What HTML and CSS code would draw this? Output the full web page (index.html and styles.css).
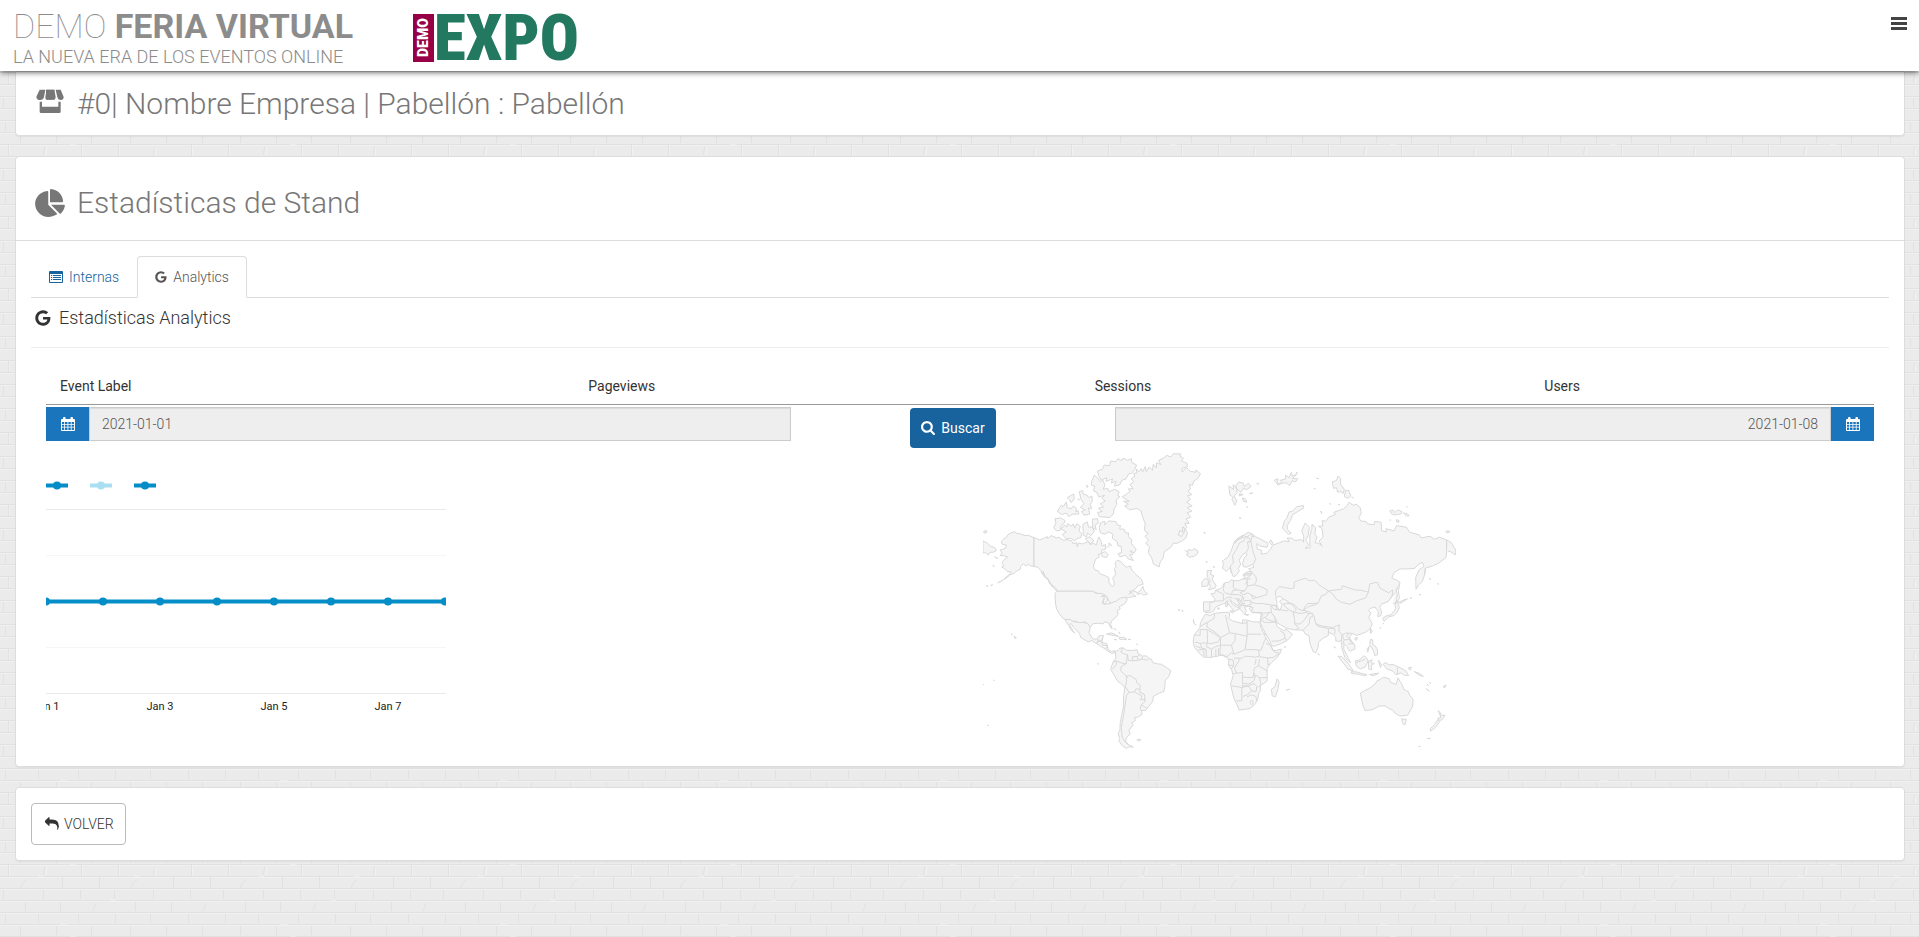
FILE: index.html
```html
<!DOCTYPE html>
<html lang="es">
<head>
<meta charset="utf-8">
<title>Estadísticas de Stand</title>
<link rel="stylesheet" href="styles.css">
</head>
<body>
<svg class="defs" aria-hidden="true">
  <symbol id="google" viewBox="0 0 1792 1792"><path d="M896 786h725q12 67 12 128 0 217-91 387.500t-259.500 266.500-386.500 96q-157 0-299-60.500t-245-163.500-163.500-245-60.500-299 60.500-299 163.500-245 245-163.500 299-60.500q300 0 515 201l-209 201q-123-119-306-119-129 0-238.500 65t-173.500 176.500-64 243.500 64 243.500 173.500 176.500 238.500 65q87 0 160-24t120-60 82-82 51.500-87 22.500-78h-436v-264z"/></symbol>
  <symbol id="calendar" viewBox="0 0 14 14"><path fill-rule="evenodd" d="M1 2h1V1q0-1 1-1h.6q1 0 1 1v1h4.800V1q0-1 1-1h.6q1 0 1 1v1h1q1 0 1 1v10q0 1-1 1H1q-1 0-1-1V3q0-1 1-1zM1 5v2h2.200V5zm3 0v2h2.500V5zm3.300 0v2h2.500V5zm3.300 0v2H13V5zM1 7.700v2h2.200v-2zm3 0v2h2.500v-2zm3.300 0v2h2.500v-2zm3.300 0v2H13v-2zM1 10.500V13h2.200v-2.500zm3 0V13h2.500v-2.500zm3.300 0V13h2.500v-2.500zm3.300 0V13H13v-2.500z"/></symbol>
</svg>

<header class="topbar">
  <a class="brand" href="#">
    <span class="brand-name"><span class="thin">DEMO</span> <strong>FERIA VIRTUAL</strong></span>
    <span class="brand-tag">LA NUEVA ERA DE LOS EVENTOS ONLINE</span>
  </a>
  <a class="expo" href="#"><span class="expo-demo">DEMO</span><span class="expo-name">EXPO</span></a>
  <button class="menu" type="button" aria-label="Menú">
    <svg viewBox="0 0 16 14"><path d="M0 0h16v3H0zM0 5h16v3H0zM0 10h16v3H0z"/></svg>
  </button>
</header>

<main>
  <section class="panel company">
    <h1 class="title">
      <svg class="title-icon" viewBox="106 260 90 80"><path d="M120 266h17l-4 22q-2 9-12 9-10 0-11-10zM141 266h9v22q-1 9-7 9t-6-9zM153 266h11l4 22q-1 9-7 9t-8-9zM168 266h15l9 22q0 9-9 9-8 0-10-9z"/><path d="M139 266h25v22q0 9-12 9t-13-9z"/><path d="M120 302h7v15h49v-15h7v30q0 4-4 4h-55q-4 0-4-4z"/></svg>
      #0| Nombre Empresa | Pabellón : Pabellón
    </h1>
  </section>

  <section class="panel stats">
    <div class="stats-head">
      <h2 class="title">
        <svg class="title-icon" viewBox="0 0 544 512"><path d="M527.790 288H290.500l158.030 158.030c6.040 6.040 15.980 6.530 22.190.68 38.700-36.460 65.320-85.610 73.130-140.860 1.340-9.460-6.510-17.850-16.060-17.850zm-15.830-64.800C503.720 103.740 408.260 8.280 288.800.04 279.680-.59 272 7.100 272 16.240V240h223.770c9.140 0 16.820-7.680 16.190-16.800zM240 288V50.710c0-9.550-8.390-17.400-17.840-16.060C86.990 51.490-4.100 155.600.14 280.370 4.500 408.510 114.830 513.590 243.030 511.980c50.400-.63 96.970-16.870 150.260-44.030 7.900-5.600 8.420-17.230 1.570-24.080L240 288z"/></svg>
        Estadísticas de Stand
      </h2>
    </div>
    <div class="stats-body">
      <nav class="tabs">
        <a class="tab" href="#"><svg class="icon" viewBox="0 0 14 12"><path fill-rule="evenodd" d="M1 0h12q1 0 1 1v10q0 1-1 1H1q-1 0-1-1V1q0-1 1-1zM1 3v8h12V3z"/><path d="M2 4h1.200v1H2zM4 4h8v1H4zM2 6h1.200v1H2zM4 6h8v1H4zM2 8h1.200v1H2zM4 8h8v1H4z"/></svg>Internas</a>
        <a class="tab active" href="#"><svg class="icon" viewBox="100 100 1592 1592"><use href="#google" width="1792" height="1792"/></svg>Analytics</a>
      </nav>
      <h3 class="subtitle"><svg viewBox="100 100 1592 1592"><use href="#google" width="1792" height="1792"/></svg>Estadísticas Analytics</h3>

      <div class="report">
        <table class="metrics">
          <thead><tr><th>Event Label</th><th>Pageviews</th><th>Sessions</th><th>Users</th></tr></thead>
        </table>
        <form class="range">
          <div class="date">
            <label class="addon" for="from"><svg class="icon" viewBox="0 0 14 14"><use href="#calendar"/></svg></label>
            <input id="from" type="text" value="2021-01-01" aria-label="Desde" readonly>
          </div>
          <button class="search" type="button"><svg class="icon" viewBox="64 128 1664 1664"><path d="M1216 832q0-185-131.500-316.500t-316.500-131.500-316.500 131.500-131.500 316.500 131.500 316.500 316.500 131.500 316.500-131.500 131.500-316.500zm512 832q0 52-38 90t-90 38q-54 0-90-38l-343-342q-179 124-399 124-143 0-273.500-55.500t-225-150-150-225-55.500-273.500 55.500-273.500 150-225 225-150 273.500-55.500 273.500 55.500 225 150 150 225 55.500 273.500q0 220-124 399l343 343q37 37 37 90z"/></svg>Buscar</button>
          <div class="date end">
            <input id="to" type="text" value="2021-01-08" aria-label="Hasta" readonly>
            <label class="addon" for="to"><svg class="icon" viewBox="0 0 14 14"><use href="#calendar"/></svg></label>
          </div>
        </form>

        <div class="charts">
          <div class="chart-cell">
            <svg class="line-chart" viewBox="0 0 400 245" role="img" aria-label="Sesiones por día">
              <g class="legend">
                <g class="series"><path d="M0 14.500h22"/><circle cx="11" cy="14.500" r="4"/></g>
                <g class="series light"><path d="M44 14.500h22"/><circle cx="55" cy="14.500" r="4"/></g>
                <g class="series"><path d="M88 14.500h22"/><circle cx="99" cy="14.500" r="4"/></g>
              </g>
              <path class="grid" d="M0 38.500h400M0 222.500h400"/>
              <path class="grid minor" d="M0 84.500h400M0 176.500h400"/>
              <g class="series">
                <path d="M0 130.500h400"/>
                <circle cx="0" cy="130.500" r="4"/><circle cx="57" cy="130.500" r="4"/><circle cx="114" cy="130.500" r="4"/><circle cx="171" cy="130.500" r="4"/><circle cx="228" cy="130.500" r="4"/><circle cx="285" cy="130.500" r="4"/><circle cx="342" cy="130.500" r="4"/><circle cx="399" cy="130.500" r="4"/>
              </g>
              <g class="axis"><text x="0" y="239">Jan 1</text><text x="114" y="239">Jan 3</text><text x="228" y="239">Jan 5</text><text x="342" y="239">Jan 7</text></g>
            </svg>
          </div>
          <div class="map-cell">
            <svg class="map" viewBox="69 30 1420 900" role="img" aria-label="Mapa mundial">
              <g>
                <!-- North America -->
                <path d="M124 303L131 294 139 290 145 280 163 272 170 277 182 279 195 284 205 283 222 290V376L212 375 205 370 197 375 190 369 182 377 181 385 170 390 163 397 150 402 142 409 136 411 146 402 154 393 141 391 136 385 125 378 132 374 126 367 130 359 143 348 134 345 120 343 126 337 121 327 137 322 139 312 127 310z"/>
                <path d="M222 290L238 297 247 294 262 287 264 293 273 284 290 291 297 289 310 298 322 296 335 300 339 308 350 305 352 318 355 306 368 309 385 302 390 311 400 307 410 312 412 300 417 288 424 302 426 315 437 311 436 325 424 328 427 337 416 340 418 348 407 355 400 376 405 387 415 390 419 398 437 405 447 410 447 424 456 437 463 433 462 420 458 412 467 401 464 383 469 376 465 367 472 358 482 361 491 372 499 379 512 375 515 387 524 397 533 405 544 414 550 430 535 434 523 447 508 452 518 458 528 466 515 468 506 470 497 472 475 480 450 488 445 475 438 464 415 458 398 451H290L280 440 268 426 263 412 252 402 242 388 235 380 222 376z"/>
                <path d="M290 451H398L408 457 428 458 434 462 424 466 441 468 443 478 435 490 429 483 433 471 427 488 437 490 450 488 470 480 481 472 497 468 502 477 493 490 478 497 481 504 472 509 475 520 467 530 455 540 452 550 457 564 450 558 446 546 433 543 430 549 415 547 398 549 391 560 383 548 372 543 366 546 355 545 348 541 337 541 330 536 312 535 298 519 290 504 287 490 285 458z"/>
                <path d="M315 536L330 536 337 541 355 545 372 545 383 548 391 560 387 575 398 594 411 595 418 585 431 584 427 597 415 602 409 608 396 599 385 603 362 590 359 578 342 560 333 548 328 550 336 564 344 577 334 568 326 554z"/>
                <path d="M409 608L415 600 426 604 441 609 445 627 455 632 464 629 465 635 455 638 440 628 432 622z"/>
                <path d="M440 580L453 576 466 581 476 587 463 584zM478 590L491 589 501 595 488 596 479 595zM463 595L470 597zM505 595l7 1zM530 609l4 3zM463 563l6 4zM476 574l5 4zM153 580l4 1zM162 586l7 5-3 2z"/>
                <!-- Arctic archipelago -->
                <path d="M413 90L428 84 433 72 449 74 452 60 468 62 474 53 486 59 490 51 503 58 514 53 515 64 530 72 525 85 515 97 506 99 498 114 486 118 479 132 463 135 469 121 454 126 458 114 438 121 441 110 424 117 416 104z"/>
                <path d="M395 122L403 103 413 111 422 122 429 118 435 132 430 145 444 142 447 152 464 145 478 153 473 164 480 167 468 177 471 190 463 203 460 219 450 230 418 227 413 215 427 211 415 202 431 198 421 189 436 180 426 172 434 163 417 168 410 153 401 150 404 135 394 132z"/>
                <path d="M358 152L368 149 370 160 380 162 387 170 396 165 397 181 391 190 395 203 385 201 390 219 372 223 365 211 376 207 361 199 372 188 363 174zM322 170L341 159 343 174 334 185 329 177zM292 211L304 193 310 197 319 183 322 200 334 203 340 195 350 203 347 213 355 209 357 219 337 220 326 227 319 216 306 221zM380 132l4 4-2 4zM353 174l6 3z"/>
                <path d="M285 233L301 231 316 239 311 249 304 253 301 268 290 270 281 260 288 248zM304 264L314 252 320 259 323 248 335 256 340 249 344 262 351 248 361 256 357 270 365 278 363 290 350 293 345 300 331 292 318 293 307 281 319 273z"/>
                <path d="M369 250L382 243 386 259 397 258 403 271 393 284 382 276 380 288 370 283zM397 235L413 233 415 247 405 252 409 266 399 262zM376 294L390 287 402 300 391 308zM423 337L436 332 445 341 440 350 427 347z"/>
                <path d="M422 245L435 241 434 252 447 240 468 242 472 252 482 254 479 264 493 265 497 276 506 276 505 288 516 296 514 307 529 325 523 336 511 329 519 341 509 342 521 359 505 354 497 343 480 348 474 338 485 335 484 316 474 315 472 302 457 292 459 280 447 273 433 280 421 275 418 260z"/>
                <path d="M69 300L83 307 91 316 104 320 109 329 100 334 89 334 85 342 76 335 69 336zM71 271l8-2 2 5-8 3zM104 348l10 5zM98 374l5 2zM113 426l8-4zM122 422l8-5zM92 434l6-2zM79 435l5 1zM131 416l9-6z"/>
                <path d="M243 393L254 409 264 414 271 429 286 440 293 449M249 390L257 410 270 423 276 437M530 459L543 447 549 436 553 450 563 459 551 463 545 458 531 460M506 460L522 450 533 455M440 320L448 315 447 306 457 315"/>
                <!-- Greenland and Iceland -->
                <path d="M487 168L499 160 511 151 505 144 520 143 510 131 522 122 514 114 525 106 521 97 531 96 529 84 538 92 544 83 548 93 556 77 559 92 568 78 578 88 580 70 590 81 590 65 603 71 596 58 612 51 620 43 633 48 641 38 663 39 660 46 671 52 664 59 681 67 683 77 666 82 667 93 680 80 691 91 708 94 708 87 722 98 714 112 702 120 698 133 688 131 692 144 684 150 696 161 683 164 692 176 680 183 697 195 682 200 696 211 682 215 692 229 679 233 688 247 675 247 681 260 676 265 683 275 678 291 665 301 652 307 640 307 633 319 613 333 609 353 601 363 598 378 581 370 575 350 565 335 569 317 557 307 566 298 555 286 565 277 553 268 556 249 548 227 543 210 531 202 510 207 494 195 506 190 491 181 508 181z"/>
                <path d="M675 327L682 333 687 325 696 329 703 323 714 329 713 339 703 346 690 349 679 341 686 337z"/>
                <path d="M655 282L660 268 669 274 668 258 675 262 672 277 665 287zM732 275l4 1zM738 362l4 2zM760 377l4 2zM655 507l5 1zM666 510l3 1z"/>
                <!-- South America -->
                <path d="M466 632L474 629 480 622 490 621 499 628 515 629 532 627 533 636 541 641 547 646 560 645 568 653 575 655 578 665 592 669 604 670 620 680 633 690 627 707 616 719 615 737 612 752 598 757 580 767 579 781 568 795 557 809 544 809 547 820 533 830 525 829 526 840 515 846 520 853 507 868 511 880 500 890 497 901 506 912 520 919 507 918 500 923 488 916 477 901 479 893 475 877 480 868 481 845 486 820 491 795 491 765 495 741 485 729 474 722 460 698 452 685 459 665 468 652z"/>
                <path d="M531 897l5-2 7 2-5 4zM412 668l4 2zM100 718l3 1zM65 730l6 1zM82 853l4 1z"/>
              </g>
              <g class="borders">
                <path d="M490 621L482 633 495 640 503 641 500 660 499 668 487 667 468 660 459 665M503 641L505 659 520 660 516 648 532 647 541 641M532 647L535 658 547 655 546 647M547 655L562 658 568 653M520 660L535 658M499 668L484 677 482 690 490 697 499 706 500 723 495 740 501 743 507 755 524 753 528 744 540 745 541 733 530 725 529 716 510 704 499 706M468 660L470 670 458 685M507 755L500 763 496 790 490 830 484 860 487 890 495 903 506 912M524 753L530 757 546 765 542 778 553 775 556 781 544 792 541 802 544 809M556 781L553 760 540 755 540 745M544 792L560 802"/>
                <path d="M499 706L505 711M425 604L428 613 444 614M436 622L445 620M415 595L413 607M428 590L426 604"/>
              </g>
              <g transform="translate(660 0)">
                <!-- Europe and Asia -->
                <path d="M128 436L134 426 147 424 155 417 166 420 180 418 188 414 197 410 189 403 200 394 213 390 206 384 222 379 219 370 200 379 190 377 189 365 193 352 202 342 198 335 187 343 178 358 183 370 175 383 179 390 167 405 160 407 155 394 151 380 140 391 128 382 131 367 127 361 144 349 154 330 163 304 176 290 194 281 205 274 218 279 227 287 237 292 265 307 262 319 240 315 231 308 232 324 246 329 244 339 260 338 272 325 278 314 268 303 274 297 281 312 300 305 312 300 328 302 322 291 338 292 345 299 365 296 371 304 372 286 366 270 376 246 389 259 385 284 378 298 387 312 376 322 391 320 390 299 390 285 396 265 397 250 408 260 405 280 412 288 406 306 417 307 427 316 418 300 430 289 427 263 416 256 429 255 427 239 438 241 448 228 468 220 462 214 491 204 503 193 508 184 520 193 529 190 541 199 545 218 537 229 543 240 560 242 563 249 583 251 585 241 604 244 606 269 620 273 619 263 643 270 651 254 680 259 690 274 719 282 724 291 751 286 764 295 779 289 801 297V332L799 350 775 368 761 374 737 382 735 401 728 421 717 432 709 445 708 410 718 387 733 376 728 364 714 372 706 382 687 384 661 384 643 395 636 412 650 417 659 425 650 450 638 465 625 482 605 490 600 499 606 513 603 525 594 527 596 512 590 505 586 498 571 503 566 508 574 517 567 530 578 549 570 565 558 574 530 584 519 578 509 588 516 604 525 612 526 624 512 631 506 627 503 618 493 609 492 625 500 640 506 654 513 666 507 661 496 651 488 627 485 614 485 598 478 602 468 600 468 590 460 580 446 574 446 584 430 592 416 604 415 620 408 636 400 632 390 606 388 585 376 579 370 568 347 567 328 564 316 560 302 552 287 543 292 557 301 563 315 570 318 564 338 580 331 590 320 600 304 608 284 616 276 615 268 595 258 580 244 553 241 545 242 538 244 515 219 516 208 504 214 496 194 498 200 511 194 519 181 506 180 498 161 486 149 475 158 490 180 503 169 509 164 512 154 500 142 485 127 490 117 494 106 500 103 509 90 516 76 514 71 511 71 483 103 483 106 475 93 459 105 457 107 448 121 444z"/>
                <path d="M801 297L815 305 822 318 827 324V342L814 333 805 330M798 271l9-2 4 4-9 3zM630 210L640 207 645 215 655 207 667 212 664 219 645 222 636 219zM671 216L684 219 688 225 680 225zM651 236L658 239 657 245 650 242zM680 197l3 1zM630 237l3 1z"/>
                <path d="M371 194L351 197 338 211 328 213 321 232 314 240 308 261 316 270 326 280 334 277 323 265 322 254 332 238 339 221 352 213 372 201zM283 118L295 113 292 125 302 128 306 121 300 118 316 115 318 102 327 111 335 94 337 106 351 99 338 113 354 113 347 123 337 119 330 134 320 126 309 126 294 132 290 125zM349 95l5 1zM402 142l5 2zM410 112l7 1zM458 122L470 119 475 105 483 113 482 130 494 145 490 158 482 151 474 154 470 140 461 142zM497 149L507 148 513 165 504 172 494 167zM516 168l5 3zM449 188l4 2zM475 190l5 2zM423 210l3 8z"/>
                <path d="M147 135L161 145 160 131 170 141 172 156 163 165 171 180 165 193 161 184 156 175 161 170 150 162zM167 135L177 123 191 127 193 137 206 127 214 136 201 146 190 142 183 154 172 145zM188 171L197 174 201 184 190 180zM178 158L190 161 178 165zM209 158l10-2zM231 128l6 1zM200 197l4 2zM178 231l6 1zM72 275l4 1zM79 362l3 1zM100 377l4 2z"/>
                <!-- British Isles -->
                <path d="M82 389L96 389 91 400 102 404 97 415 109 434 106 441 86 447 92 437 87 427 92 419 82 410zM66 424L76 412 86 418 84 435 66 437z"/>
                <path d="M114 501h4v4h-4zM138 482l6-2-1 16-5 2zM150 510h11l-2 7zM193 520l14 1-3 3zM212 483L229 488 248 488 272 492 292 494"/>
                <!-- Africa -->
                <path d="M76 520L90 524 104 517 126 515 148 514 149 526 146 532 160 541 178 545 188 548 188 537 203 538 219 543 240 543 241 549 244 562 251 577 264 601 277 622 282 630 305 625 300 639 288 654 271 669 262 682 262 700 262 720 242 735 241 752 236 759 235 771 227 788 211 803 178 808 171 790 162 772 152 730 160 705 156 688 146 674 147 660 142 649 130 642 112 646 90 650 72 649 61 640 44 620 40 603 43 583 60 560 62 545z"/>
                <path d="M292 714L298 724 294 747 287 768 277 765 275 745 285 738zM320 748l10-3zM313 618l5 1zM414 639l5 3zM463 617l4 5zM45 550l4 2zM40 536l3 12zM6 508l4 2z"/>
                <!-- Far East islands -->
                <path d="M656 420L661 426 656 449 659 471 653 482 659 500 652 514 643 524 627 528 613 541 609 532 622 524 634 522 648 504 646 491 651 478 661 488 683 474 672 477 657 485M648 446L653 460 649 488 640 487M718 462l5-1zM691 473l5-2zM748 412l6 4zM773 428l4 2zM572 562L577 571 573 578zM527 590L534 591 530 598 525 596zM600 562l4-2zM609 549l3-2z"/>
                <path d="M572 596L579 597 579 611 586 615 593 625 594 641 586 645 582 633 577 622 570 612zM562 624L569 616 564 634zM527 660L539 657 552 645 560 650 565 662 556 679 541 684 530 676zM475 646L486 647 499 661 511 675 521 691 505 685 491 667zM514 693L530 693 546 698 562 701 557 705 534 700 516 698zM566 660L578 657 572 665 584 668 574 674 577 686 567 685zM596 658l6 22 4-7zM569 701l28-4-16 8z"/>
                <path d="M610 670L619 665 627 672 641 671 662 681 678 690 687 704 673 703 664 696 649 702 640 691 621 684zM685 682L695 679 691 688zM704 692L720 698 731 707 716 702zM740 744l9 7zM748 724l6 5zM742 731l4 3zM790 738l9-6-3 8z"/>
                <!-- Australia and New Zealand -->
                <path d="M542 757L554 750 570 742 586 730 592 720 602 716 611 709 629 714 632 724 649 731 655 711 661 722 667 731 672 745 686 753 691 765 700 775 699 796 684 823 661 826 646 817 638 807 627 803 616 795 598 796 577 807 556 809 549 792zM665 834L680 836 676 852 670 849zM775 809L783 817 781 822 796 824 786 838 775 838 775 832 784 830zM773 838L780 843 767 860 753 871 751 864 764 853zM743 893l9 0zM717 917l5 0z"/>
              </g>
              <g class="sea" transform="translate(660 0)">
                <path d="M288 470L301 466 309 473 299 482 307 492 300 508 289 502 292 487z"/>
              </g>
              <g class="borders" transform="translate(660 0)">
                <path d="M154 397L152 374 161 366 158 345 170 325 180 305 191 301 197 290 208 291 213 302 203 303 206 322 199 335M213 302L216 287 222 286M206 302L213 302 218 325 222 340 228 355 220 370M213 390L214 402 201 412 203 435 195 450 172 447 160 440 161 420M203 419L196 431M213 390L228 407 230 421 222 432 203 435M222 432L243 437 262 447 261 461 246 466 231 470 223 466 215 462 204 456 190 462 180 455 195 450M134 426L131 442 131 450 138 457 155 461 158 449 172 447M107 448L131 460 130 480 108 480 90 485 90 509 74 511M132 478L138 472 150 468 158 472M155 461L175 461 190 468 184 478 190 493 176 498M190 468L192 480 212 478 215 489 200 495 189 493M172 470L185 482M178 472L173 478 182 494M164 471L184 484M174 492L196 487M215 462L219 474 231 470M188 414H213M189 403L214 402M193 398L215 398"/>
                <path d="M288 467L287 450 299 437 315 440 333 443 343 441 343 424 360 417 376 412 389 420 405 418 418 432 446 450 469 447 486 445 488 434 503 440 525 447 545 448 566 454 570 429 586 425 594 425 600 441 627 456 639 447 637 466 625 482M446 450L440 459 424 466 415 487 404 492 386 497 371 508 390 514 402 524 408 548 425 555 446 558 459 560 470 555 479 552 477 570 487 582 493 580 497 577 509 577 519 578M446 450L460 460 469 474 485 484 511 490 530 480 558 471 566 454M309 473L325 482 325 487 342 490 355 504 370 510 376 497 384 488 415 487M309 490L333 486 350 506 340 514 365 518 380 514 385 519 400 517M309 490L325 505 340 514 344 534 345 549 357 562 347 567M345 549L362 549 375 536 386 519M402 524L391 530 388 549 378 560 370 568M408 548L413 556 446 563 446 574M446 563L450 562 466 564 465 580M487 582L485 598M487 582L493 597 508 596 514 604M493 597L490 610M509 577L500 585 515 600 525 612M506 609L521 608"/>
                <path d="M210 497L220 500 214 513 244 517 275 515 273 495 292 494 297 506 285 506 277 500M275 515L285 529 287 543 268 538 254 530 242 538M254 530L262 525 267 515M244 517L249 523 244 531M242 538L254 544 270 545 287 543M251 577L262 582M276 601L298 600 316 592 313 577 301 570M316 592L320 600M285 506L304 507 325 510M285 529L292 543"/>
                <path d="M104 517L103 533 82 545 60 557M43 583H61V566H82L122 590 115 603 91 609 83 606 82 566M82 545L81 558 110 577 122 590 149 576 142 545 137 522M149 576L166 578 202 586V538M202 580H244M188 548L202 545M166 578L166 598 155 613 122 613 122 590M45 604L61 607 83 606M83 606L79 617 95 625 108 617 122 613 120 640 139 649 155 636 162 640 155 613M61 607L66 622 79 625 79 648M95 625V650M108 625V646M116 622V643M48 616L64 622M54 628L72 625 72 645M162 640L188 630 196 627 199 603 202 586M199 627L225 626 243 629 250 610 258 590M162 652L188 652 194 646 213 647 227 649 239 646 236 629M258 608L271 612 280 630 289 635 299 637 280 650 264 651 239 648M264 651V672L271 669M239 655L236 675 223 682 222 695 220 710 198 710 188 708V695L170 697 160 698M170 697L164 682 177 660 178 652M146 655L160 657 162 675 154 684M147 672L160 675M236 675L262 690M188 708L189 735 206 735 186 740 155 735M189 735L186 745V780L170 780M191 727L206 730 222 720 228 703 240 711 262 710M206 735L216 750 202 762 189 767M216 750L229 752 231 736 222 728 206 735M202 768L216 762 228 767 232 780M222 695L224 706M212 785a4 4 0 1 0 7 0 4 4 0 1 0-7 0M239 711L243 730 235 740M229 655L225 672"/>
                <path d="M530 665L545 660 556 655M653 679V700M662 681M735 401L737 382M801 297V332M163 304L170 298 184 292 190 284 202 288 212 280 224 288M165 308L174 294 192 289"/>
              </g>
            </svg>
          </div>
        </div>
      </div>
    </div>
  </section>

  <section class="panel footer">
    <a class="back" href="#"><svg class="icon" viewBox="0 128 1792 1536"><path d="M1792 1120q0 166-127 451-3 7-10.500 24t-13.500 30-13 22q-12 17-28 17-15 0-23.500-10t-8.500-25q0-9 2.500-26.500t2.500-23.500q5-68 5-123 0-112-19.500-200.500t-54-153.500-89-112-117-78.500-144-46.500-165-24-185.500-7h-224v256q0 26-19 45t-45 19-45-19l-512-512q-19-19-19-45t19-45l512-512q19-19 45-19t45 19 19 45v256h224q713 0 875 403 53 134 53 333z"/></svg>VOLVER</a>
  </section>
</main>
</body>
</html>
```
FILE: styles.css
```css
* { box-sizing: border-box; }

body {
  margin: 0;
  font: 300 14px/20px Roboto, "Open Sans", sans-serif;
  color: #333;
  background: #ebebeb url("data:image/svg+xml,%3Csvg xmlns='http://www.w3.org/2000/svg' width='220' height='72'%3E%3Cg fill='none' stroke='%23f1f1f1'%3E%3Cpath d='M0 1.5h220M0 13.5h220M0 25.5h220M0 37.500h220M0 49.500h220M0 61.500h220M9.500 2v9M46.500 2v9M82.500 2v9M119.500 2v9M155.500 2v9M192.500 2v9'/%3E%3C/g%3E%3Cg fill='none' stroke='%23e1e1e1'%3E%3Cpath d='M0 .5h70M76 .5h144M0 12.500h38M44 12.500h90M140 12.500h80M0 24.500h220M0 36.500h110M116 36.500h104M0 48.500h220M0 60.500h60M68 60.500h152M8.500 1v11M45 2l-2 9M81.500 1v11M118.500 1v11M155 2l-2 9M191.500 1v11M26.500 16q-5 2-6 8M62.500 13v11M99.500 13v11M137 16q-5 2-6 8M173.500 13v11M210.500 13v11M3.500 26v9M43.500 26v9M80.500 26v9M114.500 26v9M153.500 26v9M190.500 26v9M25.500 38v9M60.500 38v9M96 39l-3 8M135.500 38v9M171.500 38v9M206 39l-3 8M5.500 50v9M38.500 50v9M78.500 50v9M115.500 50v9M150.500 50v9M188.500 50v9M20.500 62v9M56.500 62v9M91.500 62v9M130.500 62v9M166.500 62v9M202.500 62v9'/%3E%3C/g%3E%3C/svg%3E");
}

svg { display: block; fill: currentColor; }
.defs { display: none; }
a { color: #18629d; text-decoration: none; }
.icon { width: 14px; height: 14px; flex: none; }

.topbar {
  position: relative;
  z-index: 1;
  display: flex;
  align-items: flex-start;
  height: 71px;
  padding: 6px 12px 0 13px;
  background: #fff;
  box-shadow: 0 1px 6px rgba(0, 0, 0, .7);
}
.brand { color: #8c8c8c; white-space: nowrap; }
.brand-name { display: block; font-size: 34px; line-height: 40px; }
.brand-name .thin { font-weight: 100; }
.brand-name strong { font-weight: 700; }
.brand-tag { display: block; font-size: 18px; font-weight: 300; line-height: 21px; }
.expo {
  display: flex;
  align-items: center;
  margin: 6px 0 0 60px;
  height: 52px;
}
.expo-demo {
  writing-mode: vertical-rl;
  rotate: 180deg;
  width: 21px;
  height: 48px;
  background: #970046;
  color: #fff;
  font-size: 14px;
  font-weight: 900;
  line-height: 20px;
  text-align: center;
}
.expo-name {
  color: #23795f;
  font-family: "Roboto Condensed", "Open Sans Condensed", "Liberation Sans Narrow", Roboto, sans-serif;
  font-size: 65px;
  font-weight: 900;
  line-height: 52px;
}
.menu {
  margin: 11px 0 0 auto;
  padding: 0;
  border: 0;
  background: none;
  color: #444;
}
.menu svg { width: 16px; height: 14px; }

main { padding: 0 14px 40px 15px; }
.panel {
  background: #fff;
  border: 1px solid #ddd;
  border-radius: 4px;
  box-shadow: 0 1px 1px rgba(0, 0, 0, .05);
}
.panel + .panel { margin-top: 20px; }
.company { height: 65px; margin-top: 0; padding: 14px 19px; border-radius: 0 0 4px 4px; }

.title {
  display: flex;
  align-items: center;
  gap: 12px;
  margin: 0;
  color: #777;
  font-size: 30px;
  font-weight: 300;
  line-height: 36px;
}
.title-icon { width: 30px; height: 28px; flex: none; }
.company .title-icon { margin-bottom: 6px; }

.stats-head { padding: 28px 19px 19px; border-bottom: 1px solid #ddd; }
.stats-body { padding: 15px 15px 15px; }
.tabs { display: flex; border-bottom: 1px solid #ddd; }
.tab {
  display: flex;
  align-items: center;
  gap: 6px;
  margin-bottom: -1px;
  padding: 10px 17px;
  border: 1px solid transparent;
  border-radius: 4px 4px 0 0;
}
.tab .icon { height: 12px; }
.tab.active { color: #555; background: #fff; border-color: #ddd; border-bottom-color: #fff; }
.tab.active .icon { width: 12px; }
.subtitle {
  display: flex;
  align-items: center;
  gap: 8px;
  height: 50px;
  margin: 0;
  padding: 0 4px 10px;
  border-bottom: 1px solid #eee;
  font-size: 18px;
  font-weight: 300;
}
.subtitle svg { width: 16px; height: 16px; }

.report { padding: 20px 15px 0; }
.metrics { width: 100%; border-collapse: collapse; table-layout: fixed; }
.metrics th {
  width: 28.9%;
  padding: 8px 14px;
  border-bottom: 1px solid #999;
  font-weight: 400;
  text-align: left;
}
.metrics th:nth-child(2) { width: 27.7%; }
.metrics th:nth-child(3) { width: 24.6%; }
.metrics th:last-child { width: 18.8%; }

.range {
  display: grid;
  grid-template-columns: 745fr 324fr 759fr;
  align-items: start;
  padding-top: 2px;
}
.date { display: flex; }
.date input {
  flex: 1;
  min-width: 0;
  height: 34px;
  padding: 6px 12px;
  border: 1px solid #ccc;
  border-radius: 0;
  background: #eee;
  color: #555;
  font: inherit;
  box-shadow: inset 0 1px 1px rgba(0, 0, 0, .08);
}
.date.end input { text-align: right; }
.addon {
  display: flex;
  align-items: center;
  justify-content: center;
  width: 43px;
  background: #1b75bc;
  color: #fff;
}
.search {
  display: flex;
  align-items: center;
  justify-self: center;
  gap: 6px;
  height: 40px;
  margin-top: 1px;
  padding: 0 11px;
  border: 0;
  border-radius: 4px;
  background: #18629d;
  color: #fff;
  font: 400 14px/20px Roboto, "Open Sans", sans-serif;
}

.charts { display: grid; grid-template-columns: 1fr 1fr; padding-top: 3px; }
.chart-cell { padding-top: 20px; }
.line-chart { width: 400px; max-width: 100%; overflow: hidden; }
.series path { stroke: #058dc7; stroke-width: 4; }
.series circle { fill: #058dc7; }
.series.light path { stroke: #aadff3; }
.series.light circle { fill: #aadff3; }
.grid { stroke: #eaeaea; }
.grid.minor { stroke: #f6f6f6; }
.axis { fill: #222; font: 400 11px Roboto, sans-serif; text-anchor: middle; }
.map-cell { padding-left: 23px; }
.map { width: 473px; max-width: 100%; fill: #f5f5f5; stroke: #d8d8d8; stroke-width: 3; stroke-linejoin: round; }
.map .borders { fill: none; }
.map .sea { fill: #fff; }

.footer { padding: 15px; }
.back {
  display: flex;
  width: fit-content;
  align-items: center;
  gap: 5px;
  height: 42px;
  padding: 0 11px 0 13px;
  border: 1px solid #bbb;
  border-radius: 4px;
  color: #333;
}
```
